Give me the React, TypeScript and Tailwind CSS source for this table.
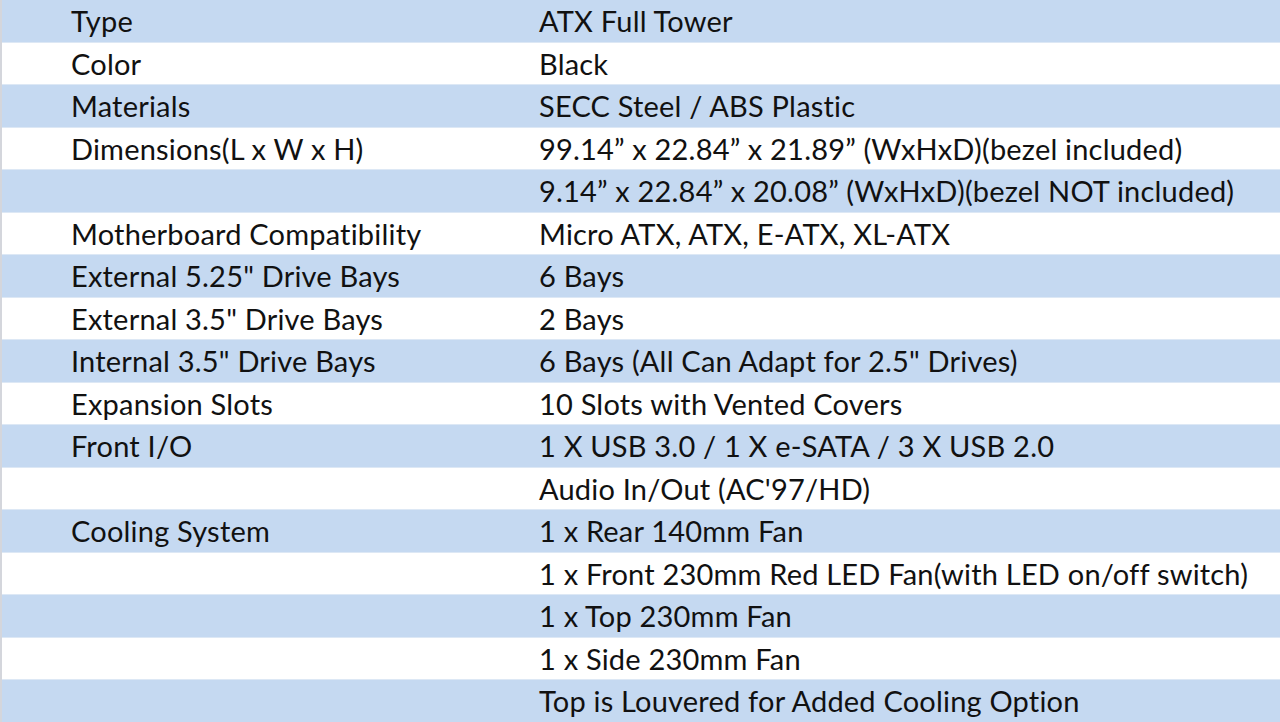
import React from 'react';

const rows: [string, string][] = [
    ['Type', 'ATX Full Tower'],
    ['Color', 'Black'],
    ['Materials', 'SECC Steel / ABS Plastic'],
    ['Dimensions(L x W x H)', '99.14\u201D x 22.84\u201D x 21.89\u201D (WxHxD)(bezel included)'],
    ['', '9.14\u201D x 22.84\u201D x 20.08\u201D (WxHxD)(bezel NOT included)'],
    ['Motherboard Compatibility', 'Micro ATX, ATX, E-ATX, XL-ATX'],
    ['External 5.25" Drive Bays', '6 Bays'],
    ['External 3.5" Drive Bays', '2 Bays'],
    ['Internal 3.5" Drive Bays', '6 Bays (All Can Adapt for 2.5" Drives)'],
    ['Expansion Slots', '10 Slots with Vented Covers'],
    ['Front I/O', '1 X USB 3.0 / 1 X e-SATA / 3 X USB 2.0'],
    ['', "Audio In/Out (AC'97/HD)"],
    ['Cooling System', '1 x Rear 140mm Fan'],
    ['', '1 x Front 230mm Red LED Fan(with LED on/off switch)'],
    ['', '1 x Top 230mm Fan'],
    ['', '1 x Side 230mm Fan'],
    ['', 'Top is Louvered for Added Cooling Option'],
];

export default function App() {
    return (
        <div className="w-[1280px] h-[722px] overflow-hidden bg-white flex" style={{ fontFamily: 'Lato, "Open Sans", sans-serif' }}>
            <div className="w-[2px] bg-[#d4d6dc]" />
            <div className="flex-1 flex flex-col">
                {rows.map(([label, value], i) => (
                    <div
                        key={i}
                        className={`h-[42.5px] shrink-0 flex items-center text-[29px] tracking-[0.2px] text-[#111] border-b border-[#dde8f5] ${i % 2 === 0 ? 'bg-[#c5d9f1]' : 'bg-white'}`}
                    >
                        <div className="w-[537px] pl-[69px] whitespace-nowrap">{label}</div>
                        <div className="whitespace-nowrap">{value}</div>
                    </div>
                ))}
            </div>
        </div>
    );
}
